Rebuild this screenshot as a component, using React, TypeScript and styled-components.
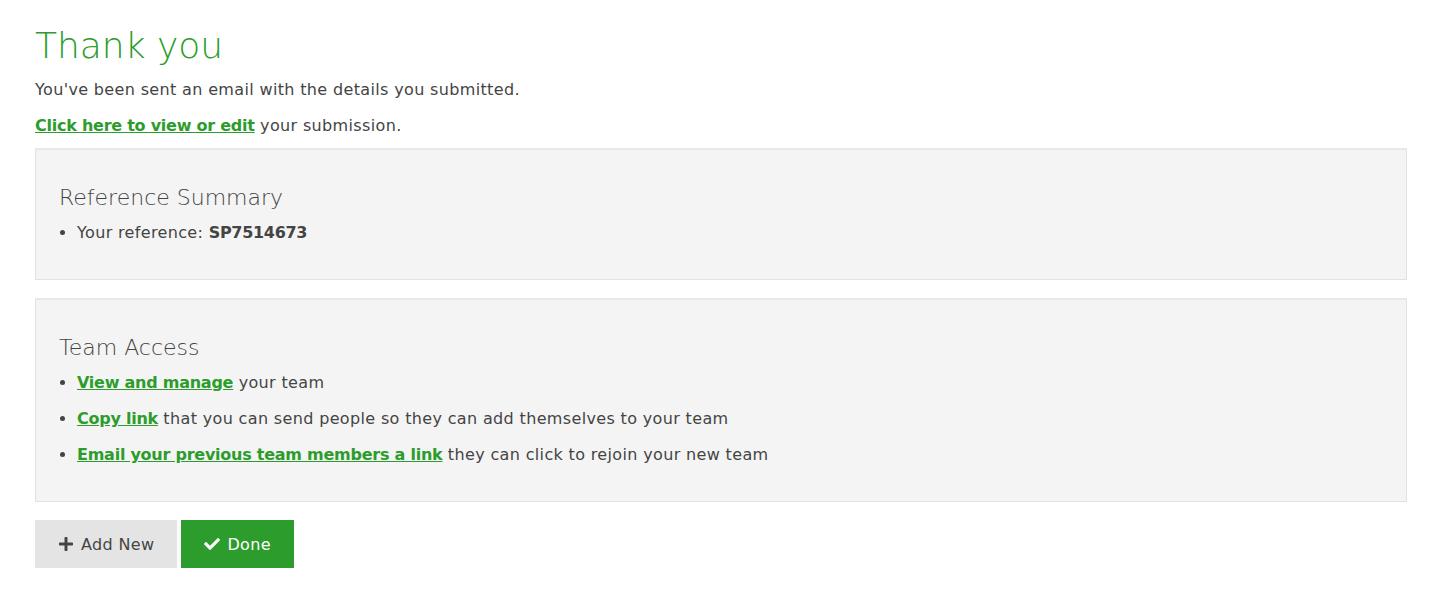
import React from "react";
import styled, { createGlobalStyle } from "styled-components";
import { FaPlus, FaCheck } from "react-icons/fa";

const FONT = `"DejaVu Sans", "Noto Sans", sans-serif`;
const GREEN = "#2c9c2c";

const Global = createGlobalStyle`
  html, body { margin: 0; padding: 0; background: #fff; }
  body { font-family: ${FONT}; color: #444; font-size: 16px; letter-spacing: 0.35px; }
`;

const Page = styled.main`
  padding: 22px 34px 20px 35px;
`;

const Title = styled.h1`
  margin: 0 0 10px;
  font-size: 36px;
  font-weight: 300;
  line-height: 48px;
  letter-spacing: 0;
  color: ${GREEN};
`;

const Para = styled.p`
  margin: 0 0 16px;
  line-height: 20px;
  &:last-of-type { margin-bottom: 12px; }
`;

const Link = styled.a`
  color: ${GREEN};
  font-weight: 700;
  letter-spacing: -0.25px;
  text-decoration: underline;
  cursor: pointer;
`;

const Panel = styled.section`
  background: #f4f4f4;
  border: 1px solid #e2e2e2;
  border-top: 2px solid #e8e8e8;
  padding: 34px 23px 36px;
  margin-bottom: 18px;
`;

const PanelTitle = styled.h3`
  margin: 0 0 11px;
  font-size: 22px;
  font-weight: 300;
  line-height: 28px;
  letter-spacing: 0;
  color: #444;
`;

const List = styled.ul`
  margin: 0;
  padding-left: 18px;
`;

const Item = styled.li`
  line-height: 20px;
  margin-bottom: 16px;
  &:last-child { margin-bottom: 0; }
`;

const Strong = styled.strong`
  font-weight: 700;
  letter-spacing: -0.3px;
`;

const Actions = styled.div`
  display: flex;
  gap: 4px;
`;

const Button = styled.button<{ $primary?: boolean }>`
  display: inline-flex;
  align-items: center;
  gap: 7px;
  height: 48px;
  padding: 0 23px;
  border: none;
  font-family: ${FONT};
  font-size: 16px;
  letter-spacing: 0.35px;
  cursor: pointer;
  background: ${(p) => (p.$primary ? GREEN : "#e4e4e4")};
  color: ${(p) => (p.$primary ? "#fff" : "#444")};
  svg { font-size: 16px; }
`;

export default function App() {
  return (
    <>
      <Global />
      <Page>
        <Title>Thank you</Title>
        <Para>You've been sent an email with the details you submitted.</Para>
        <Para>
          <Link>Click here to view or edit</Link> your submission.
        </Para>
        <Panel>
          <PanelTitle>Reference Summary</PanelTitle>
          <List>
            <Item>
              Your reference: <Strong>SP7514673</Strong>
            </Item>
          </List>
        </Panel>
        <Panel>
          <PanelTitle>Team Access</PanelTitle>
          <List>
            <Item>
              <Link>View and manage</Link> your team
            </Item>
            <Item>
              <Link>Copy link</Link> that you can send people so they can add themselves to your team
            </Item>
            <Item>
              <Link>Email your previous team members a link</Link> they can click to rejoin your new team
            </Item>
          </List>
        </Panel>
        <Actions>
          <Button>
            <FaPlus /> Add New
          </Button>
          <Button $primary>
            <FaCheck /> Done
          </Button>
        </Actions>
      </Page>
    </>
  );
}
